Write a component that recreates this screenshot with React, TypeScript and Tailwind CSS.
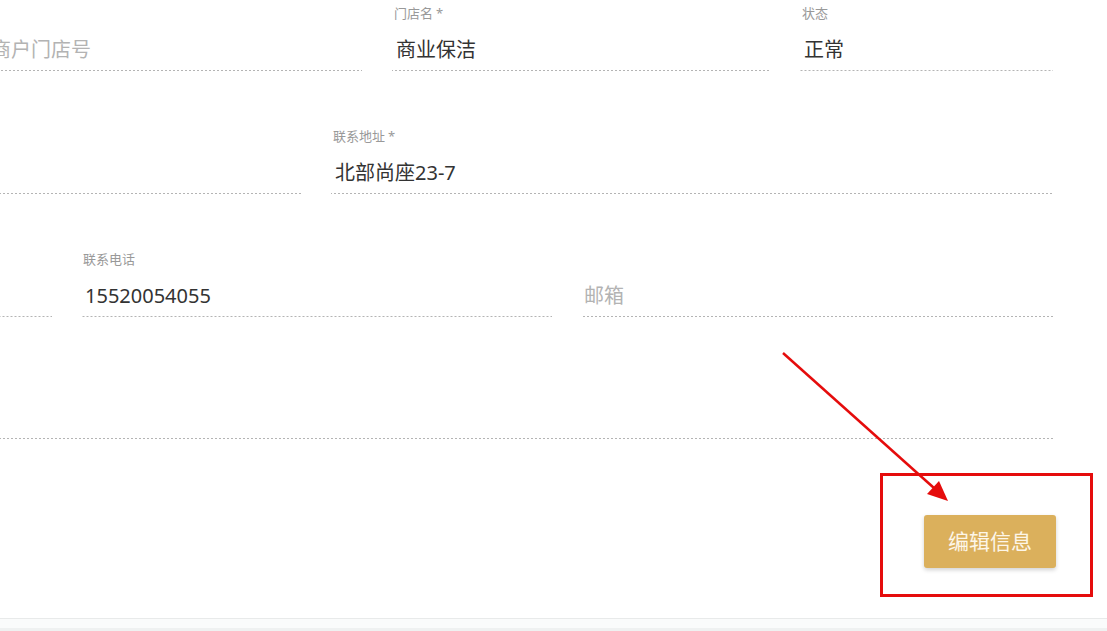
import React from 'react';

type FieldProps = {
  width: string;
  label?: string;
  required?: boolean;
  value?: string;
  placeholder?: string;
  inputHeight?: string;
};

// dotted underline used by every input
const underline =
  'bg-[linear-gradient(to_right,#b4b4b4_50%,transparent_50%)] bg-[length:4px_1px] bg-repeat-x bg-bottom';

const Field = ({ width, label, required, value, placeholder, inputHeight = 'h-[41px]' }: FieldProps) => {
  return (
    <div className={`${width} shrink-0 flex flex-col`}>
      <div className="h-[20px] text-[13px] leading-[20px] text-[#999] pl-[2px]">
        {value && label ? (
          <>
            {label}
            {required && <span className="ml-[3px]">*</span>}
          </>
        ) : null}
      </div>
      <div className={`mt-[7px] ${inputHeight} flex items-center pb-[1px] ${underline}`}>
        {value ? (
          <span className="text-[20px] text-[#333] pl-[4px]">{value}</span>
        ) : placeholder ? (
          <span className="text-[20px] text-[#b3b3b3] pl-[3px]">{placeholder}</span>
        ) : null}
      </div>
    </div>
  );
};

const App = () => {
  return (
    <div className="relative w-[1107px] h-[631px] overflow-hidden bg-white flex flex-col font-['Noto_Sans','Noto_Sans_CJK_SC',sans-serif]">
      {/* Form */}
      <div className="pt-[3px] pr-[54px] flex flex-col">
        <div className="flex justify-end gap-[30px]">
          <Field width="w-[374px]" label="商户门店号" placeholder="商户门店号" />
          <Field width="w-[378px]" label="门店名" required value="商业保洁" />
          <Field width="w-[253px]" label="状态" value="正常" />
        </div>

        <div className="flex justify-end gap-[29px] mt-[55px]">
          <Field width="w-[450px]" label="联系人" />
          <Field width="w-[722px]" label="联系地址" required value="北部尚座23-7" />
        </div>

        <div className="flex justify-end gap-[29px] mt-[55px]">
          <Field width="w-[471px]" label="联系人" />
          <Field width="w-[471px]" label="联系电话" value="15520054055" />
          <Field width="w-[472px]" label="邮箱" placeholder="邮箱" />
        </div>

        <div className="flex justify-end mt-[55px]">
          <Field width="w-[1400px]" label="备注" inputHeight="h-[40px]" />
        </div>
      </div>

      {/* Actions */}
      <div className="flex justify-end pr-[51px] mt-[76px]">
        <button className="w-[132px] h-[53px] rounded-[3px] bg-[#dbb05c] text-[#fdf6e8] text-[21px] shadow-[0_2px_4px_rgba(0,0,0,0.18)]">
          编辑信息
        </button>
      </div>

      {/* Footer strip */}
      <div className="mt-[50px] flex-1 border-t border-[#e8eaea] bg-[#fafbfb] flex flex-col">
        <div className="flex-1" />
        <div className="h-[3px] bg-[#eff1f1]" />
      </div>

      {/* Annotation overlay */}
      <div className="absolute left-[880px] top-[473px] w-[213px] h-[124px] border-[3px] border-[#e50c0c]" />
      <svg className="absolute left-0 top-0 pointer-events-none" width="1107" height="631">
        <line x1="783" y1="353" x2="934" y2="488" stroke="#e50c0c" strokeWidth="2.5" />
        <polygon points="948,501 927,494 939,481" fill="#e50c0c" />
      </svg>
    </div>
  );
};

export default App;
